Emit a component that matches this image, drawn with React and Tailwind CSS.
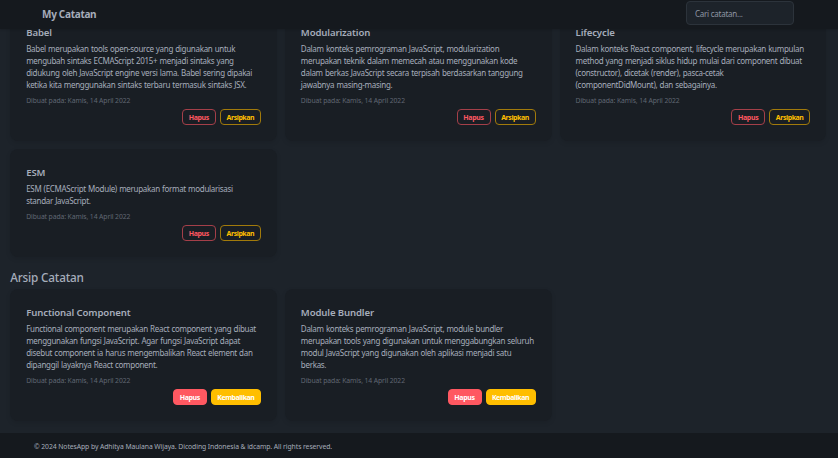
const DATE = 'Dibuat pada: Kamis, 14 April 2022';

const activeNotes = [
  {
    title: 'Babel',
    lines: [
      'Babel merupakan tools open-source yang digunakan untuk',
      'mengubah sintaks ECMAScript 2015+ menjadi sintaks yang',
      'didukung oleh JavaScript engine versi lama. Babel sering dipakai',
      'ketika kita menggunakan sintaks terbaru termasuk sintaks JSX.',
    ],
  },
  {
    title: 'Modularization',
    lines: [
      'Dalam konteks pemrograman JavaScript, modularization',
      'merupakan teknik dalam memecah atau menggunakan kode',
      'dalam berkas JavaScript secara terpisah berdasarkan tanggung',
      'jawabnya masing-masing.',
    ],
  },
  {
    title: 'Lifecycle',
    lines: [
      'Dalam konteks React component, lifecycle merupakan kumpulan',
      'method yang menjadi siklus hidup mulai dari component dibuat',
      '(constructor), dicetak (render), pasca-cetak',
      '(componentDidMount), dan sebagainya.',
    ],
  },
  {
    title: 'ESM',
    lines: ['ESM (ECMAScript Module) merupakan format modularisasi', 'standar JavaScript.'],
  },
];

const archivedNotes = [
  {
    title: 'Functional Component',
    lines: [
      'Functional component merupakan React component yang dibuat',
      'menggunakan fungsi JavaScript. Agar fungsi JavaScript dapat',
      'disebut component ia harus mengembalikan React element dan',
      'dipanggil layaknya React component.',
    ],
  },
  {
    title: 'Module Bundler',
    lines: [
      'Dalam konteks pemrograman JavaScript, module bundler',
      'merupakan tools yang digunakan untuk menggabungkan seluruh',
      'modul JavaScript yang digunakan oleh aplikasi menjadi satu',
      'berkas.',
    ],
  },
];

function NoteCard({ note, archived }) {
  const base = 'box-border flex h-4 items-center justify-center rounded-[4px] border text-[7px] font-bold leading-none';
  return (
    <article className="flex flex-col rounded-[8px] bg-[#191e24] p-4 shadow-[0_2px_5px_rgba(0,0,0,0.1)]">
      <h2 className="h-[14px] text-[9.6px] font-semibold leading-[15px] tracking-[-0.12px]">{note.title}</h2>
      <p className="mt-1 text-[8px] leading-[12px] tracking-[-0.3px] [word-spacing:0.4px]">
        {note.lines.map((line) => (
          <span key={line} className="block whitespace-nowrap">{line}</span>
        ))}
      </p>
      <p className="mt-1 h-[10px] text-[6.8px] leading-[11px] tracking-[-0.1px] text-[#606773]">{DATE}</p>
      <div className="mt-1 flex justify-end gap-1">
        <button
          className={`${base} w-[34px] tracking-[-0.35px] ${archived ? 'border-[#ff5861] bg-[#ff5861] text-white' : 'border-[#a43f49] text-[#ff5861]'}`}
        >
          Hapus
        </button>
        <button
          className={`${base} tracking-[-0.43px] ${archived ? 'w-[50px] border-[#ffbe00] bg-[#ffbe00] text-white' : 'w-[41px] border-[#a17a0b] text-[#ffbe00]'}`}
        >
          {archived ? 'Kembalikan' : 'Arsipkan'}
        </button>
      </div>
    </article>
  );
}

function NoteGrid({ notes, archived = false }) {
  return (
    <div className="grid w-[816px] grid-cols-3 items-start gap-2">
      {notes.map((note) => (
        <NoteCard key={note.title} note={note} archived={archived} />
      ))}
    </div>
  );
}

export default function App() {
  return (
    <div className="flex h-[458px] w-[838px] flex-col overflow-hidden bg-[#1d232a] font-['Noto_Sans','Open_Sans',sans-serif] text-[#a6adbb]">
      <header className="z-10 flex h-[29px] shrink-0 items-start justify-between bg-[#15191e] pl-[42px] pr-11 shadow-[0_1px_2px_rgba(0,0,0,0.15)]">
        <span className="mt-[7px] text-[10px] font-bold leading-[14px] tracking-[-0.3px]">My Catatan</span>
        <input
          className="mt-px h-6 w-[108px] rounded-[4px] border border-[#2c333b] bg-[#1d232a] px-2 pt-px text-[8px] tracking-[-0.25px] outline-none placeholder:text-[#8e95a2]"
          placeholder="Cari catatan..."
        />
      </header>
      <main className="-mt-5 flex h-[424px] shrink-0 flex-col pl-[10.2px]">
        <NoteGrid notes={activeNotes} />
        <h1 className="mt-3 h-5 text-[11.75px] font-medium leading-[17px] tracking-[-0.18px]">Arsip Catatan</h1>
        <NoteGrid notes={archivedNotes} archived />
      </main>
      <footer className="h-[25px] shrink-0 bg-[#15191e] pl-[34px] pt-2 text-[6.8px] leading-[11px] tracking-[-0.07px]">
        © 2024 NotesApp by Adhitya Maulana Wijaya. Dicoding Indonesia &amp; idcamp. All rights reserved.
      </footer>
    </div>
  );
}
